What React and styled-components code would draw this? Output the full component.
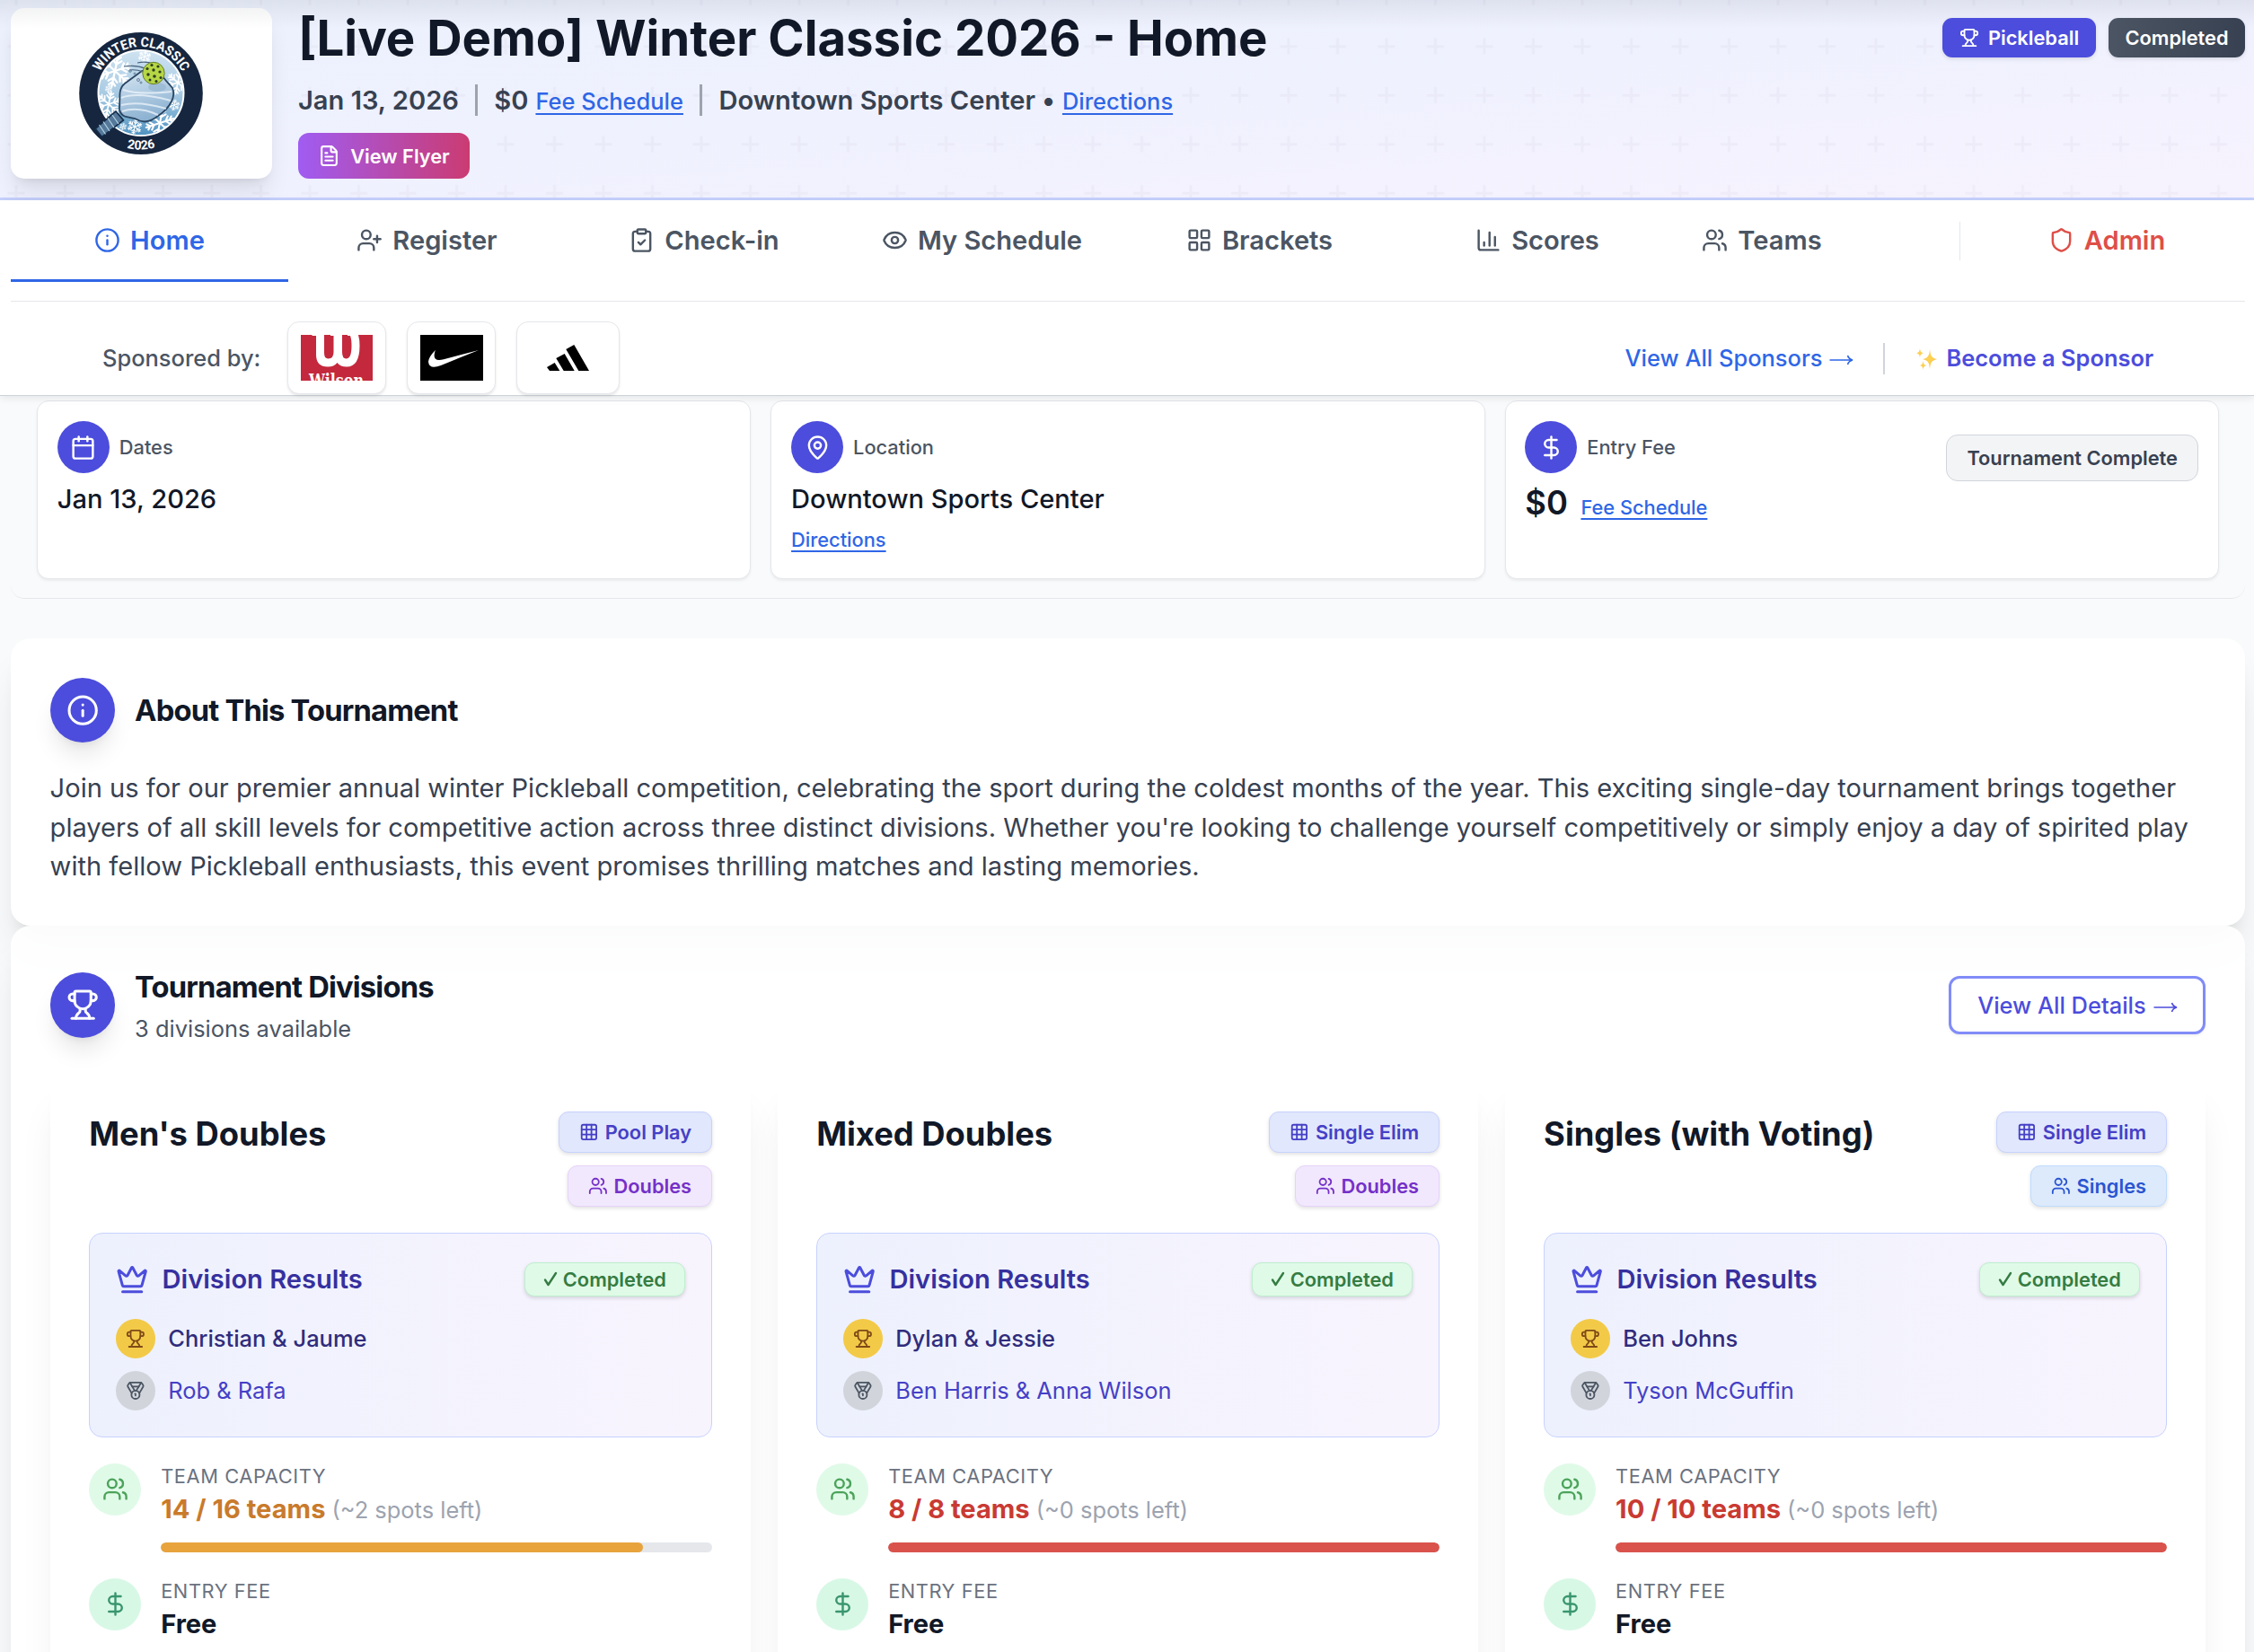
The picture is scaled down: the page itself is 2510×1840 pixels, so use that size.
import React from "react";
import styled, { createGlobalStyle } from "styled-components";
import {
  Info, UserPlus, ClipboardCheck, Eye, LayoutGrid, ChartColumn, Users, Shield, Trophy, FileText,
  Calendar, MapPin, DollarSign, Crown, Medal, Grid3x3,
} from "lucide-react";

const Global = createGlobalStyle`
  *, *::before, *::after { box-sizing: border-box; }
  body { margin: 0; background: #f9fafb; font-family: Inter, "Liberation Sans", sans-serif; color: #111827; -webkit-font-smoothing: antialiased; }
  h1, h2, h3, p { margin: 0; }
  a { color: inherit; text-decoration: none; }
  svg { display: block; flex: none; }
`;

const Page = styled.div`
  width: 2510px;
  height: 1840px;
  overflow: hidden;
  background: #f9fafb;
`;

/* ---------- hero ---------- */
const Hero = styled.header`
  position: relative;
  height: 223px;
  padding: 9px 10px 0 12px;
  border-bottom: 3px solid #c7d2fe;
  background: linear-gradient(to bottom right, #ecf1fd 0%, #eff1fe 50%, #f7f3fe 100%);
  display: flex;
`;
const HeroPattern = styled.svg`
  position: absolute;
  inset: 0;
  width: 100%;
  height: 220px;
`;
const HeroShade = styled.div`
  position: absolute;
  inset: 0 0 auto 0;
  height: 32px;
  background: linear-gradient(to bottom, rgba(17, 24, 39, 0.07), rgba(17, 24, 39, 0));
`;
const LogoCard = styled.div`
  position: relative;
  width: 291px;
  height: 190px;
  border-radius: 15px;
  background: #fff;
  box-shadow: 0 18px 27px -5px rgba(0, 0, 0, 0.1), 0 7px 11px -7px rgba(0, 0, 0, 0.1);
  display: flex;
  justify-content: center;
  padding-top: 27px;
  padding-right: 2px;
`;
const HeroText = styled.div`
  position: relative;
  flex: 1;
  margin-left: 29px;
`;
const Title = styled.h1`
  font-size: 54.53px;
  line-height: 66px;
  font-weight: 700;
  color: #111827;
  white-space: nowrap;
`;
const MetaRow = styled.div`
  margin-top: 16px;
  height: 40px;
  display: flex;
  align-items: center;
  white-space: nowrap;
  font-size: 29.08px;
  font-weight: 600;
  color: #374151;
`;
const MetaSep = styled.span`
  width: 3px;
  height: 35px;
  background: #9ca3af;
  margin: 0 18px 0 18.5px;
`;
const Link = styled.a`
  color: #2f66e6;
  font-size: ${(p) => p.$size}px;
  font-weight: 500;
  line-height: 1.25;
  text-decoration: underline;
  text-decoration-thickness: 2px;
  text-underline-offset: 4px;
  margin: ${(p) => p.$margin || 0};
  white-space: nowrap;
`;
const FlyerButton = styled.button`
  margin-top: 17px;
  height: 51px;
  width: 191px;
  padding: 0;
  border: 0;
  border-radius: 12px;
  font: 600 21.81px Inter, sans-serif;
  color: #fff;
  background: linear-gradient(to right, #a05cf2, #cb3b72);
  display: flex;
  align-items: center;
  justify-content: center;
  gap: 11px;
`;
const Badges = styled.div`
  position: relative;
  margin-top: 11px;
  display: flex;
  gap: 14px;
  height: 44px;
`;
const Badge = styled.span`
  width: ${(p) => p.$width}px;
  height: 44px;
  border-radius: 11px;
  display: flex;
  align-items: center;
  justify-content: center;
  gap: 10px;
  color: #fff;
  font-size: 21.81px;
  font-weight: 600;
  background: ${(p) => p.$bg};
  box-shadow: 0 2px 4px rgba(0, 0, 0, 0.1);
`;

/* ---------- navigation ---------- */
const TopBar = styled.div`
  position: relative;
  z-index: 1;
  height: 218px;
  background: #fff;
  border-bottom: 1px solid #cdd2d9;
  padding: 0 10px 0 12px;
  box-shadow: 0 2px 9px rgba(0, 0, 0, 0.09);
`;
const Nav = styled.nav`
  height: 113px;
  border-bottom: 1px solid #e5e7eb;
  display: grid;
  grid-template-columns: 309px 309px 308px 311px 307px 312px 188px 137px 306px;
`;
const NavItem = styled.a`
  height: 91px;
  border-bottom: 3px solid ${(p) => (p.$active ? "#2f66e6" : "transparent")};
  color: ${(p) => (p.$active ? "#2f66e6" : p.$admin ? "#de4f47" : "#4b5563")};
  display: flex;
  align-items: center;
  justify-content: center;
  gap: 11px;
  font-size: 29.08px;
  font-weight: 600;
  white-space: nowrap;
`;
const NavDivider = styled.span`
  width: 1px;
  height: 43px;
  background: #e5e7eb;
  margin: 24px 0 0 126px;
`;
const SponsorRow = styled.div`
  height: 104px;
  padding: 22px 102px 0 102px;
  display: flex;
  align-items: flex-start;
  font-size: 25.45px;
  line-height: 82px;
  white-space: nowrap;
`;
const SponsorLabel = styled.span`
  color: #4b5563;
  font-weight: 500;
  width: 206px;
`;
const SponsorBox = styled.div`
  width: ${(p) => p.$width}px;
  height: 81px;
  margin-right: 23px;
  border: 1px solid #e5e7eb;
  border-radius: 13px;
  background: #fff;
  box-shadow: 0 2px 3px rgba(0, 0, 0, 0.09);
  display: flex;
  align-items: center;
  justify-content: center;
`;
const SponsorLinks = styled.div`
  margin-left: auto;
  display: flex;
  align-items: center;
  height: 82px;
`;
const TextLink = styled.a`
  color: ${(p) => p.$color};
  font-weight: ${(p) => p.$weight};
  display: flex;
  align-items: center;
  gap: ${(p) => p.$gap}px;
`;
const ThinSep = styled.span`
  width: 2px;
  height: 35px;
  background: #d1d5db;
  margin: 0 35px 0 33px;
`;

/* ---------- info cards ---------- */
const InfoWrap = styled.section`
  margin: 0 10px 0 12px;
  height: 226px;
  padding: 5px 29px 0 29px;
  border-bottom: 1px solid #e5e7eb;
  border-radius: 0 0 15px 15px;
  display: grid;
  grid-template-columns: repeat(3, 1fr);
  gap: 21.8px;
`;
const InfoCard = styled.div`
  height: 198.500px;
  border: 1px solid #e5e7eb;
  border-radius: 13px;
  background: #fff;
  box-shadow: 0 2px 3px rgba(0, 0, 0, 0.06);
  padding: 22px 21.8px;
  display: flex;
  justify-content: space-between;
`;
const InfoHead = styled.div`
  display: flex;
  align-items: center;
  gap: 11px;
  font-size: 21.81px;
  font-weight: 500;
  color: #4b5563;
`;
const Disc = styled.span`
  flex: none;
  width: ${(p) => p.$size}px;
  height: ${(p) => p.$size}px;
  border-radius: 50%;
  background: ${(p) => p.$bg || "#4c4ddc"};
  color: ${(p) => p.$fg || "#fff"};
  box-shadow: ${(p) => (p.$raised ? "0 18px 27px -5px rgba(0,0,0,0.1), 0 7px 11px -7px rgba(0,0,0,0.1)" : "none")};
  display: flex;
  align-items: center;
  justify-content: center;
`;
const InfoValue = styled.div`
  margin-top: 8px;
  font-size: 29.08px;
  line-height: 42px;
  font-weight: 500;
  color: #111827;
`;
const InfoLinkLine = styled.div`
  margin-top: 11px;
  display: flex;
`;
const FeeLine = styled.div`
  margin-top: 10px;
  display: flex;
  align-items: baseline;
  gap: 14.500px;
  font-size: 36.35px;
  line-height: 46px;
  font-weight: 600;
`;
const StatusPill = styled.div`
  margin-top: 15px;
  width: 281px;
  height: 52px;
  border: 1px solid #d1d5db;
  border-radius: 13px;
  background: #f3f4f6;
  color: #374151;
  font-size: 21.81px;
  font-weight: 600;
  display: flex;
  align-items: center;
  justify-content: center;
`;

/* ---------- sections ---------- */
const Panel = styled.section`
  margin: ${(p) => p.$top || 0}px 10px 0 12px;
  height: ${(p) => p.$height}px;
  padding: ${(p) => p.$pad}px 43.6px 0 43.6px;
  background: rgba(255, 255, 255, 0.9);
  border-radius: 22px;
  box-shadow: 0 36px 45px -9px rgba(0, 0, 0, 0.1), 0 15px 18px -11px rgba(0, 0, 0, 0.1);
`;
const PanelHead = styled.div`
  display: flex;
  align-items: center;
  gap: 21.8px;
`;
const PanelHeadText = styled.div`
  padding-top: 3px;
`;
const PanelTitle = styled.h2`
  font-size: 32.72px;
  line-height: 40px;
  font-weight: 700;
  letter-spacing: -0.82px;
`;
const PanelSub = styled.p`
  margin-top: 10px;
  font-size: 25.45px;
  line-height: 34px;
  color: #4b5563;
`;
const About = styled.p`
  margin-top: 29px;
  font-size: 29.08px;
  line-height: 43.6px;
  color: #374151;
  white-space: nowrap;
`;
const DetailsButton = styled.button`
  margin-left: auto;
  width: 286px;
  height: 65px;
  border: 3px solid #818cf8;
  border-radius: 12px;
  background: #fff;
  color: #4c4ddc;
  font: 500 25.45px Inter, sans-serif;
  display: flex;
  align-items: center;
  justify-content: center;
  gap: 8px;
  padding: 0;
  box-shadow: 0 2px 3px rgba(0, 0, 0, 0.06);
`;
const Divisions = styled.div`
  margin-top: 31.700px;
  display: grid;
  grid-template-columns: repeat(3, 1fr);
  gap: 29.08px;
`;
const DivisionCard = styled.article`
  height: 760px;
  border-radius: 22px;
  background: #fff;
  padding: 43.6px;
  box-shadow: 0 36px 45px -9px rgba(0, 0, 0, 0.08), 0 15px 18px -11px rgba(0, 0, 0, 0.08);
`;
const DivisionHead = styled.div`
  height: 135px;
  display: flex;
  justify-content: space-between;
`;
const DivisionTitle = styled.h3`
  font-size: 36.35px;
  line-height: 50px;
  font-weight: 700;
  white-space: nowrap;
`;
const TagStack = styled.div`
  display: flex;
  flex-direction: column;
  align-items: flex-end;
  gap: 14.500px;
`;
const TAGS = {
  indigo: { bg: "#e1e7fc", border: "#c7d2fe", fg: "#4540c6" },
  purple: { bg: "#f1e8fd", border: "#e5d3fb", fg: "#7530c8" },
  blue: { bg: "#dceafc", border: "#bfdbfe", fg: "#2b55d0" },
};
const Tag = styled.span`
  height: 45.500px;
  padding: 0 21.8px;
  border: 1px solid ${(p) => TAGS[p.$tone].border};
  border-radius: 11px;
  background: ${(p) => TAGS[p.$tone].bg};
  color: ${(p) => TAGS[p.$tone].fg};
  box-shadow: 0 2px 4px rgba(0, 0, 0, 0.12);
  font-size: 21.81px;
  font-weight: 600;
  display: flex;
  align-items: center;
  gap: 7px;
  white-space: nowrap;
`;
const Results = styled.div`
  height: 227.400px;
  border: 1px solid #c7d2fe;
  border-radius: 15px;
  background: linear-gradient(to right, #edf1fd, #f8f4fe);
  padding: 30.200px 29px 0 29px;
`;
const ResultsHead = styled.div`
  height: 41px;
  display: flex;
  align-items: center;
  color: #4c4ddc;
`;
const ResultsTitle = styled.span`
  margin-left: 15px;
  font-size: 29.08px;
  font-weight: 600;
  color: #36309e;
`;
const DoneTag = styled.span`
  margin-left: auto;
  width: 179px;
  height: 38px;
  border: 1px solid #bdf0cd;
  border-radius: 11px;
  background: #e0fae8;
  color: #357c42;
  box-shadow: 0 2px 4px rgba(0, 0, 0, 0.14);
  font-size: 21.81px;
  font-weight: 600;
  display: flex;
  align-items: center;
  justify-content: center;
  gap: 6px;
`;
const Finisher = styled.div`
  margin-top: ${(p) => p.$gap}px;
  height: 43.6px;
  display: flex;
  align-items: center;
  gap: 14.500px;
  font-size: 25.45px;
  font-weight: ${(p) => (p.$first ? 500 : 400)};
  color: ${(p) => (p.$first ? "#302c7c" : "#4540c6")};
`;
const Stat = styled.div`
  margin-top: 29.1px;
  display: flex;
  gap: 21.8px;
`;
const StatBody = styled.div`
  flex: 1;
`;
const StatLabel = styled.div`
  font-size: 21.81px;
  line-height: 28px;
  letter-spacing: 0.6px;
  text-transform: uppercase;
  color: #6b7280;
`;
const StatValue = styled.div`
  margin-top: 2px;
  font-size: 29.08px;
  line-height: 42px;
  font-weight: 700;
  color: ${(p) => p.$color || "#111827"};
  white-space: nowrap;
`;
const Spots = styled.span`
  margin-left: 7px;
  font-size: 25.45px;
  font-weight: 400;
  color: #9ca3af;
`;
const Track = styled.div`
  margin-top: 15px;
  height: 10.9px;
  border-radius: 6px;
  background: #e5e7eb;
  overflow: hidden;
`;
const Fill = styled.div`
  height: 10.9px;
  border-radius: 6px;
  background: ${(p) => p.$color};
`;

/* ---------- drawings ---------- */
const ArrowSvg = styled.svg`
  margin-top: 4px;
`;
function Arrow() {
  return (
    <ArrowSvg width="27" height="14" viewBox="0 0 27 14" fill="none" stroke="currentColor" strokeWidth="1.7">
      <path d="M0.5 7H25.500M20.500 2C21.300 4.600 23.200 6.300 26 7C23.200 7.700 21.300 9.400 20.500 12" />
    </ArrowSvg>
  );
}

function Check() {
  return (
    <svg width="16" height="17" viewBox="0 0 16 17" fill="none" stroke="currentColor" strokeWidth="2.4" strokeLinecap="round" strokeLinejoin="round">
      <path d="M2 9.500L5.500 15L14 2" />
    </svg>
  );
}

function Sparkles() {
  return (
    <svg width="23" height="25" viewBox="0 0 26 28">
      <defs>
        <linearGradient id="spark" x1="0" y1="0" x2="1" y2="1">
          <stop offset="0" stopColor="#fbbf6a" />
          <stop offset="0.5" stopColor="#fcd24f" />
          <stop offset="1" stopColor="#f9b85e" />
        </linearGradient>
      </defs>
      <g fill="url(#spark)">
        <path d="M17 2C17.800 10 19 12.700 26 14.500C19 16.300 17.800 19 17 27C16.200 19 15 16.300 8 14.500C15 12.700 16.200 10 17 2Z" />
        <path d="M4.500 1C5 5 5.700 6 9 7C5.700 8 5 9 4.500 13C4 9 3.300 8 0 7C3.300 6 4 5 4.500 1Z" />
        <path d="M8.500 16.500C9 20.500 9.600 21.600 12.800 22.500C9.600 23.400 9 24.500 8.500 28C8 24.500 7.400 23.400 4.200 22.500C7.400 21.600 8 20.500 8.500 16.500Z" />
      </g>
    </svg>
  );
}

function Snowflake({ x, y, r }) {
  return (
    <g transform={`translate(${x} ${y})`} stroke="#fff" strokeWidth={r * 0.13} strokeLinecap="round" fill="none">
      {[0, 60, 120, 180, 240, 300].map((a) => (
        <path key={a} transform={`rotate(${a + 12})`} d={`M0 0V${-r}M0 ${-r * 0.42}l${r * 0.28} ${-r * 0.25}M0 ${-r * 0.42}l${-r * 0.28} ${-r * 0.25}M0 ${-r * 0.7}l${r * 0.2} ${-r * 0.2}M0 ${-r * 0.7}l${-r * 0.2} ${-r * 0.2}`} />
      ))}
    </g>
  );
}

function EventLogo() {
  return (
    <svg width="138" height="136" viewBox="0 0 138 136">
      <defs>
        <linearGradient id="ice" x1="0" y1="0" x2="0" y2="1">
          <stop offset="0" stopColor="#cfe3f1" />
          <stop offset="0.5" stopColor="#a9cbe3" />
          <stop offset="1" stopColor="#4f93c1" />
        </linearGradient>
        <linearGradient id="blade" x1="0" y1="0" x2="0.3" y2="1">
          <stop offset="0" stopColor="#d8e7f3" />
          <stop offset="1" stopColor="#8db2d2" />
        </linearGradient>
        <clipPath id="disc"><circle cx="69" cy="67.500" r="47" /></clipPath>
        <path id="arcTop" d="M17.500 67.500A51.500 51.500 0 0 1 120.500 67.500" />
        <path id="arcBottom" d="M5.500 67A63.500 63.500 0 0 0 132.500 67" />
      </defs>
      <ellipse cx="69" cy="68" rx="68.800" ry="68" fill="#16263f" />
      <circle cx="69" cy="67.500" r="47.500" fill="url(#ice)" stroke="#fff" strokeWidth="2" />
      <g clipPath="url(#disc)">
        <Snowflake x={40} y={43} r={18} />
        <Snowflake x={73} y={27} r={7} />
        <Snowflake x={33} y={80} r={14} />
        <Snowflake x={62} y={105} r={8} />
        <Snowflake x={90} y={101} r={16} />
        <Snowflake x={106} y={81} r={6} />
        <Snowflake x={110} y={56} r={13} />
        <Snowflake x={49} y={105} r={4} />
        <Snowflake x={33} y={63} r={4} />
      </g>
      <path d="M70 43Q78 41 86 44Q92 47 97 54L104 62Q107 69 103 77Q98 87 88 93Q81 99 73 99.500Q67 99 62 96L52 94Q46 92 45 86L45.500 68Q46 61 51 57Z" fill="url(#blade)" stroke="#2a4562" strokeWidth="1.800" />
      <g stroke="#eef5fb" strokeWidth="2" fill="none" opacity="0.75">
        <path d="M49 64Q66 70 103 66" />
        <path d="M47 73Q64 66 102 76" />
        <path d="M47 81Q66 76 97 85" />
        <path d="M48 88Q66 82 88 92" />
      </g>
      <ellipse cx="87" cy="61" rx="10" ry="5" fill="#8fb1cd" opacity="0.6" />
      <path d="M41 88L49.500 98L25.500 116.500L18.300 107.500Z" fill="#55799a" stroke="#152c49" strokeWidth="1.600" />
      <path d="M37 92L44 102M32 95.500L39 106M27 99.500L34 110M22.500 103L29.500 113.500" stroke="#b8d2e4" strokeWidth="1.200" />
      <path d="M65 34Q75 32 82 35M50 38Q64 36 73 40M56 42Q64 41 71 44" stroke="#47637d" strokeWidth="1.200" fill="none" />
      <g fill="none" stroke="#5b7892" strokeWidth="0.900">
        <circle cx="57" cy="43" r="1.300" /><circle cx="62" cy="46" r="1" /><circle cx="66" cy="53" r="1.500" /><circle cx="69" cy="56" r="1" />
      </g>
      <circle cx="83" cy="45.500" r="12.200" fill="#b7d645" stroke="#5b7323" strokeWidth="0.900" />
      <g fill="#2b3d26">
        <circle cx="81" cy="36.500" r="1.600" /><circle cx="88" cy="38" r="1.600" />
        <circle cx="76" cy="40.500" r="1.600" /><circle cx="83" cy="42" r="1.700" /><circle cx="90" cy="44" r="1.600" />
        <circle cx="77" cy="47" r="1.700" /><circle cx="84" cy="49" r="1.800" /><circle cx="91" cy="50.500" r="1.500" />
        <circle cx="79" cy="53" r="1.500" /><circle cx="86" cy="54.500" r="1.500" />
      </g>
      <text fill="#fff" fontFamily="Roboto, sans-serif" fontWeight="700" fontSize="15">
        <textPath href="#arcTop" startOffset="24.500" textLength="113" lengthAdjust="spacingAndGlyphs">WINTER CLASSIC</textPath>
      </text>
      <text fill="#fff" fontFamily="Roboto, sans-serif" fontWeight="700" fontSize="14">
        <textPath href="#arcBottom" startOffset="83.700" textLength="32">2026</textPath>
      </text>
    </svg>
  );
}

function WilsonLogo() {
  return (
    <svg width="80" height="51" viewBox="0 0 80 51">
      <rect width="80" height="51" fill="#c4283c" />
      <path d="M12.500 0H26V20Q26 26.500 30.500 26.500Q36.500 26.500 36.500 19V1H33V0H46V19Q46 26.500 50.500 26.500Q56.500 26.500 56.500 12Q56.500 5 55 1H52V0H64Q65.500 5 65.500 12Q65.500 35.500 51 35.500Q44 35.500 40.500 31Q37 35.500 30 35.500Q17 35.500 17 22V1H12.500Z" fill="#fff" />
      <text x="9" y="58" fill="#fff" fontFamily="DejaVu Serif, serif" fontWeight="700" fontSize="19.500" textLength="61" lengthAdjust="spacingAndGlyphs">Wilson</text>
    </svg>
  );
}

function SwooshLogo() {
  return (
    <svg width="70" height="51" viewBox="0 0 70 51">
      <rect width="70" height="51" />
      <path d="M65 17L23 34Q10 39 9 30Q9 25 16.800 17Q13 28 21 28Q23 28 26 27.200Z" fill="#fff" />
    </svg>
  );
}

function StripesLogo() {
  return (
    <svg width="48" height="29" viewBox="0 0 48 29">
      <path d="M21.300 5L30.300 0L47 29H35.300ZM10.300 15L19.700 10L30.700 29H18.700ZM0 25L8.700 20L14.300 29H3Z" />
    </svg>
  );
}

const NAV = [
  { label: "Home", icon: Info, active: true },
  { label: "Register", icon: UserPlus },
  { label: "Check-in", icon: ClipboardCheck },
  { label: "My Schedule", icon: Eye },
  { label: "Brackets", icon: LayoutGrid },
  { label: "Scores", icon: ChartColumn },
  { label: "Teams", icon: Users },
];

const DIVISIONS = [
  { name: "Men's Doubles", format: "Pool Play", kind: "Doubles", tone: "purple", first: "Christian & Jaume", second: "Rob & Rafa", used: 14, total: 16 },
  { name: "Mixed Doubles", format: "Single Elim", kind: "Doubles", tone: "purple", first: "Dylan & Jessie", second: "Ben Harris & Anna Wilson", used: 8, total: 8 },
  { name: "Singles (with Voting)", format: "Single Elim", kind: "Singles", tone: "blue", first: "Ben Johns", second: "Tyson McGuffin", used: 10, total: 10 },
];

function Division({ d }) {
  const full = d.used >= d.total;
  return (
    <DivisionCard>
      <DivisionHead>
        <DivisionTitle>{d.name}</DivisionTitle>
        <TagStack>
          <Tag $tone="indigo"><Grid3x3 size={21.8} />{d.format}</Tag>
          <Tag $tone={d.tone}><Users size={21.8} />{d.kind}</Tag>
        </TagStack>
      </DivisionHead>
      <Results>
        <ResultsHead>
          <Crown size={36.35} />
          <ResultsTitle>Division Results</ResultsTitle>
          <DoneTag><Check />Completed</DoneTag>
        </ResultsHead>
        <Finisher $first $gap={23.5}>
          <Disc $size={43.6} $bg="#f3ca48" $fg="#7f4a17"><Trophy size={21.8} /></Disc>
          {d.first}
        </Finisher>
        <Finisher $gap={14.6}>
          <Disc $size={43.6} $bg="#d1d5db" $fg="#4b5563"><Medal size={21.8} /></Disc>
          {d.second}
        </Finisher>
      </Results>
      <Stat>
        <Disc $size={58.2} $bg="#e0fae8" $fg="#4ba35a"><Users size={29} /></Disc>
        <StatBody>
          <StatLabel>Team Capacity</StatLabel>
          <StatValue $color={full ? "#c93a32" : "#c97a2b"}>
            {d.used} / {d.total} teams<Spots>(~{d.total - d.used} spots left)</Spots>
          </StatValue>
          <Track><Fill $color={full ? "#d9534c" : "#e8a33d"} style={{ width: `${(d.used / d.total) * 100}%` }} /></Track>
        </StatBody>
      </Stat>
      <Stat>
        <Disc $size={58.2} $bg="#d8f8e6" $fg="#3a966f"><DollarSign size={29} /></Disc>
        <StatBody>
          <StatLabel>Entry Fee</StatLabel>
          <StatValue>Free</StatValue>
        </StatBody>
      </Stat>
    </DivisionCard>
  );
}

export default function App() {
  return (
    <Page>
      <Global />
      <Hero>
        <HeroPattern>
          <defs>
            <pattern id="plus" width="54.500" height="54.500" patternUnits="userSpaceOnUse" patternTransform="translate(-9.500 -30)">
              <path d="M18 27.250H37M27.500 18V36" stroke="#9c92ac" strokeOpacity="0.07" strokeWidth="3" />
            </pattern>
          </defs>
          <rect width="2510" height="220" fill="url(#plus)" />
        </HeroPattern>
        <LogoCard><EventLogo /></LogoCard>
        <HeroShade />
        <HeroText>
          <Title>[Live Demo] Winter Classic 2026 - Home</Title>
          <MetaRow>
            Jan 13, 2026
            <MetaSep />
            $0
            <Link $size={25.45} $margin="3px 0 0 8px">Fee Schedule</Link>
            <MetaSep />
            Downtown Sports Center •
            <Link $size={25.45} $margin="3px 0 0 8px">Directions</Link>
          </MetaRow>
          <FlyerButton><FileText size={25} />View Flyer</FlyerButton>
        </HeroText>
        <Badges>
          <Badge $width={171} $bg="#4c4ddc"><Trophy size={22} />Pickleball</Badge>
          <Badge $width={152} $bg="linear-gradient(to right, #4b5563, #374151)">Completed</Badge>
        </Badges>
      </Hero>

      <TopBar>
        <Nav>
          {NAV.map(({ label, icon: Icon, active }) => (
            <NavItem key={label} $active={active}><Icon size={29} />{label}</NavItem>
          ))}
          <NavDivider />
          <NavItem $admin><Shield size={29} />Admin</NavItem>
        </Nav>
        <SponsorRow>
          <SponsorLabel>Sponsored by:</SponsorLabel>
          <SponsorBox $width={110}><WilsonLogo /></SponsorBox>
          <SponsorBox $width={99}><SwooshLogo /></SponsorBox>
          <SponsorBox $width={115}><StripesLogo /></SponsorBox>
          <SponsorLinks>
            <TextLink $color="#2f66e6" $weight={500} $gap={8}>View All Sponsors<Arrow /></TextLink>
            <ThinSep />
            <TextLink $color="#4c4ddc" $weight={600} $gap={10}><Sparkles />Become a Sponsor</TextLink>
          </SponsorLinks>
        </SponsorRow>
      </TopBar>

      <InfoWrap>
        <InfoCard>
          <div>
            <InfoHead><Disc $size={58}><Calendar size={29} /></Disc>Dates</InfoHead>
            <InfoValue>Jan 13, 2026</InfoValue>
          </div>
        </InfoCard>
        <InfoCard>
          <div>
            <InfoHead><Disc $size={58}><MapPin size={29} /></Disc>Location</InfoHead>
            <InfoValue>Downtown Sports Center</InfoValue>
            <InfoLinkLine><Link $size={21.81}>Directions</Link></InfoLinkLine>
          </div>
        </InfoCard>
        <InfoCard>
          <div>
            <InfoHead><Disc $size={58}><DollarSign size={29} /></Disc>Entry Fee</InfoHead>
            <FeeLine>$0<Link $size={21.81}>Fee Schedule</Link></FeeLine>
          </div>
          <StatusPill>Tournament Complete</StatusPill>
        </InfoCard>
      </InfoWrap>

      <Panel $top={44} $height={320} $pad={43.5}>
        <PanelHead>
          <Disc $size={72.7} $raised><Info size={36.35} /></Disc>
          <PanelTitle>About This Tournament</PanelTitle>
        </PanelHead>
        <About>
          Join us for our premier annual winter Pickleball competition, celebrating the sport during the coldest months of the year. This exciting single-day tournament brings together<br />
          players of all skill levels for competitive action across three distinct divisions. Whether you're looking to challenge yourself competitively or simply enjoy a day of spirited play<br />
          with fellow Pickleball enthusiasts, this event promises thrilling matches and lasting memories.
        </About>
      </Panel>

      <Panel $height={1000} $pad={45}>
        <PanelHead>
          <Disc $size={72.7} $raised><Trophy size={36.35} /></Disc>
          <PanelHeadText>
            <PanelTitle>Tournament Divisions</PanelTitle>
            <PanelSub>3 divisions available</PanelSub>
          </PanelHeadText>
          <DetailsButton>View All Details<Arrow /></DetailsButton>
        </PanelHead>
        <Divisions>
          {DIVISIONS.map((d) => <Division key={d.name} d={d} />)}
        </Divisions>
      </Panel>
    </Page>
  );
}
